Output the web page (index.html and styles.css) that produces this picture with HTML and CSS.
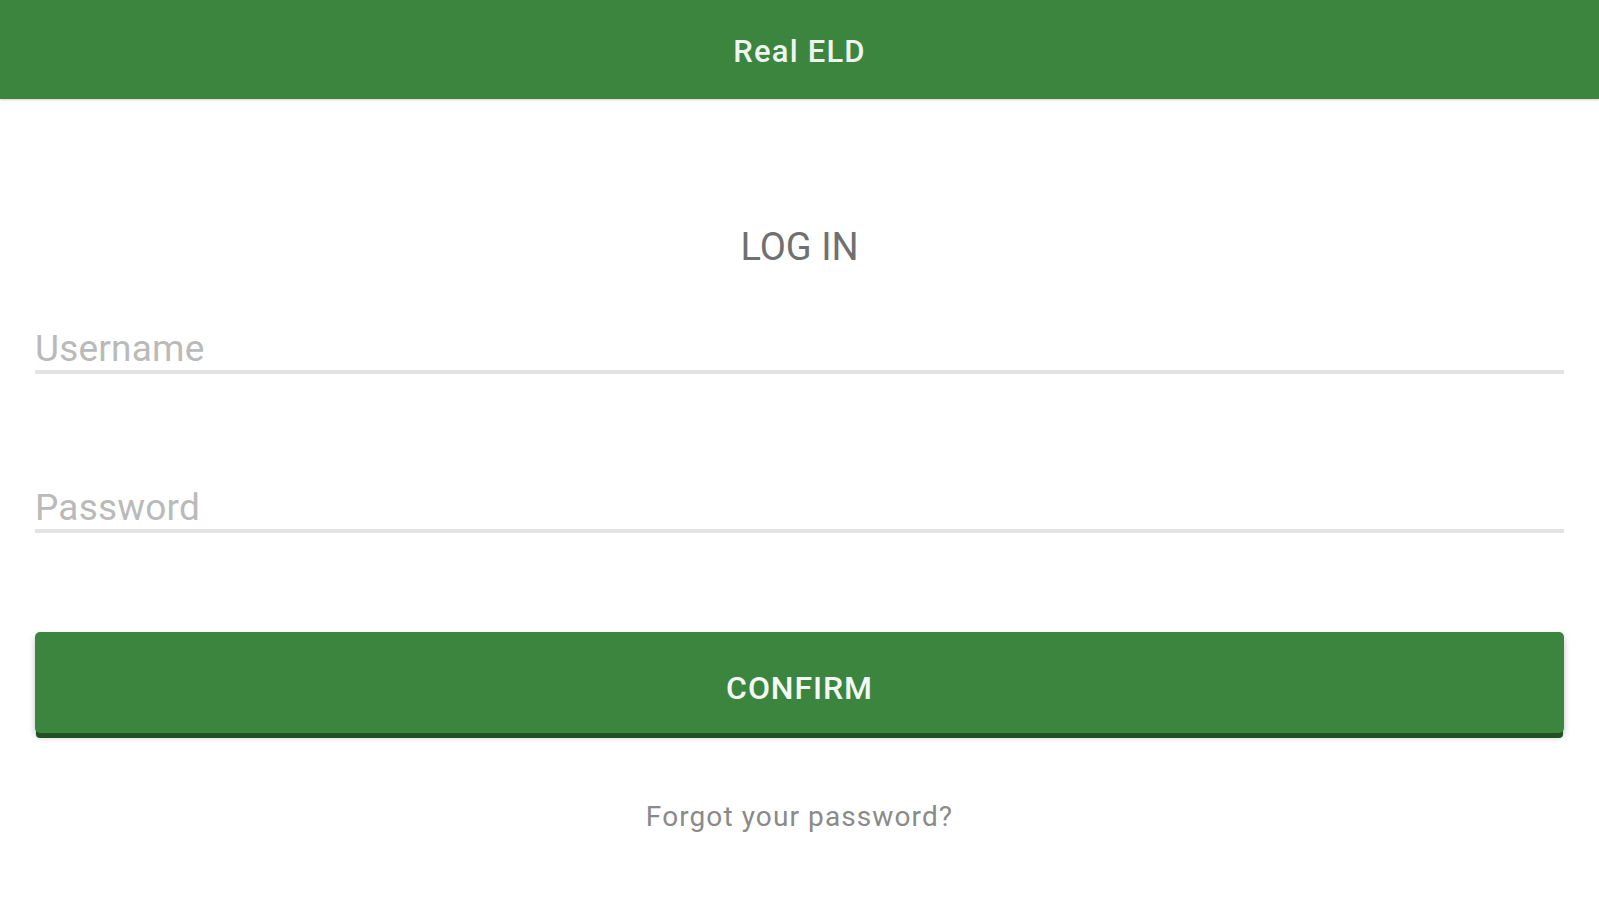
FILE: index.html
```html
<!DOCTYPE html>
<html lang="en">
<head>
<meta charset="utf-8">
<title>Real ELD - Log in</title>
<link rel="stylesheet" href="styles.css">
</head>
<body>
<header class="appbar">
  <h1 class="appbar-title">Real ELD</h1>
</header>
<main class="login">
  <h2 class="login-title">LOG IN</h2>
  <form class="login-form">
    <input class="field field-user" type="text" placeholder="Username">
    <input class="field field-pass" type="password" placeholder="Password">
    <button class="btn-confirm" type="button">CONFIRM</button>
  </form>
  <a class="forgot" href="#">Forgot your password?</a>
</main>
</body>
</html>
```

FILE: styles.css
```css
html, body {
  margin: 0;
  padding: 0;
  background: #ffffff;
  font-family: Roboto, "Liberation Sans", Arial, sans-serif;
}

.appbar {
  height: 99px;
  box-sizing: border-box;
  padding-top: 34px;
  background: #3b853f;
  display: flex;
  justify-content: center;
  box-shadow: 0 1px 2px rgba(0, 0, 0, 0.18);
}

.appbar-title {
  margin: 0;
  font-size: 31px;
  line-height: 36px;
  font-weight: 500;
  letter-spacing: 1.2px;
  color: #eef4ee;
}

.login {
  padding: 0 35px;
  display: flex;
  flex-direction: column;
  align-items: stretch;
}

.login-title {
  margin: 126px 0 0;
  text-align: center;
  font-size: 38px;
  line-height: 44px;
  font-weight: 400;
  color: #707070;
}

.login-form {
  display: flex;
  flex-direction: column;
  margin: 0;
}

.field {
  display: block;
  width: 100%;
  box-sizing: content-box;
  height: 42px;
  padding: 2px 0 0;
  margin: 0;
  border: none;
  border-bottom: 4px solid #e3e3e3;
  outline: none;
  background: transparent;
  font-family: Roboto, "Liberation Sans", Arial, sans-serif;
  font-size: 37px;
  line-height: 42px;
  letter-spacing: 0.2px;
  color: #444;
}

.field::placeholder {
  color: #bababa;
  opacity: 1;
}

.field-user {
  margin-top: 57px;
}

.field-pass {
  margin-top: 111px;
}

.btn-confirm {
  margin-top: 99px;
  height: 101px;
  box-sizing: border-box;
  padding: 37px 0 26px;
  border: none;
  border-radius: 5px;
  background: #3b853f;
  color: #f4f8f4;
  font-family: Roboto, "Liberation Sans", Arial, sans-serif;
  font-size: 32px;
  line-height: 38px;
  font-weight: 500;
  letter-spacing: 0.9px;
  box-shadow: 0 6px 0 -1px #1f5122, 0 4px 6px rgba(0, 0, 0, 0.25);
  cursor: pointer;
}

.forgot {
  margin-top: 67px;
  align-self: center;
  font-size: 28px;
  line-height: 34px;
  letter-spacing: 1.1px;
  color: #8a8a8a;
  text-decoration: none;
}
```
